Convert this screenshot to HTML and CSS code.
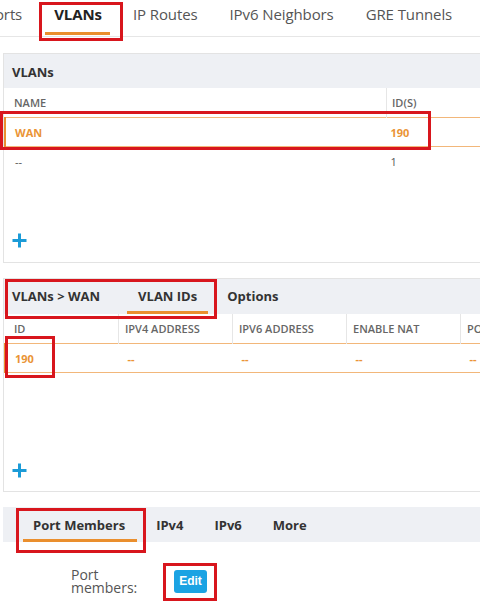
FILE: index.html
```html
<!DOCTYPE html>
<html lang="en">
<head>
    <meta charset="UTF-8">
    <title>VLANs</title>
    <link rel="stylesheet" href="styles.css">
</head>
<body>
<div class="page">
    <div class="topnav">
        <a class="tab">Ports</a>
        <a class="tab active">VLANs</a>
        <a class="tab">IP Routes</a>
        <a class="tab">IPv6 Neighbors</a>
        <a class="tab">GRE Tunnels</a>
    </div>

    <!-- VLAN list -->
    <div class="panel vlans">
        <div class="panel-head">
            <span class="title">VLANs</span>
        </div>
        <table class="grid">
            <tr class="cols">
                <th class="c-name">NAME</th>
                <th>ID(S)</th>
            </tr>
            <tr class="sel">
                <td>WAN</td>
                <td>190</td>
            </tr>
            <tr>
                <td>--</td>
                <td>1</td>
            </tr>
        </table>
        <div class="panel-foot">
            <svg class="plus" width="17" height="17" viewBox="0 0 17 17"><path d="M8.5 1.5v14M1.5 8.5h14" stroke="#1b9bd7" stroke-width="3"/></svg>
        </div>
    </div>

    <!-- VLAN detail -->
    <div class="panel ids">
        <div class="panel-head">
            <span class="title crumb">VLANs &gt; WAN</span>
            <a class="subtab active">VLAN IDs</a>
            <a class="subtab">Options</a>
        </div>
        <table class="grid">
            <tr class="cols">
                <th class="c-id">ID</th>
                <th class="c-addr">IPV4 ADDRESS</th>
                <th class="c-addr">IPV6 ADDRESS</th>
                <th class="c-addr">ENABLE NAT</th>
                <th class="c-addr">PORT MEMBERS</th>
            </tr>
            <tr class="sel">
                <td>190</td>
                <td>--</td>
                <td>--</td>
                <td>--</td>
                <td>--</td>
            </tr>
        </table>
        <div class="panel-foot">
            <svg class="plus" width="17" height="17" viewBox="0 0 17 17"><path d="M8.5 1.5v14M1.5 8.5h14" stroke="#1b9bd7" stroke-width="3"/></svg>
        </div>
    </div>

    <!-- VLAN ID detail -->
    <div class="panel members">
        <div class="panel-head">
            <a class="subtab active">Port Members</a>
            <a class="subtab">IPv4</a>
            <a class="subtab">IPv6</a>
            <a class="subtab">More</a>
        </div>
        <div class="form-row">
            <label class="form-label">Port members:</label>
            <button class="btn-edit">Edit</button>
        </div>
    </div>

    <!-- red callouts -->
    <div class="mark m1"></div>
    <div class="mark m2"></div>
    <div class="mark m3"></div>
    <div class="mark m4"></div>
    <div class="mark m5"></div>
    <div class="mark m6"></div>
</div>
</body>
</html>
```

FILE: styles.css
```css
html, body {
    margin: 0;
    padding: 0;
    background: #fff;
}

body {
    width: 480px;
    height: 601px;
    overflow: hidden;
    font-family: "Open Sans", "Noto Sans", sans-serif;
    color: #555;
}

.page {
    position: relative;
    width: 480px;
    height: 601px;
}

/* top navigation */
.topnav {
    display: flex;
    margin-left: -30px;
    border-bottom: 1px solid #e6e6e6;
    width: 600px;
}

.topnav .tab {
    display: block;
    margin: 0 7px 1px;
    padding: 4px 9px 8px;
    font-size: 15px;
    line-height: 20px;
    letter-spacing: -0.1px;
    color: #555;
    white-space: nowrap;
    border-bottom: 3px solid transparent;
}

.topnav .tab.active {
    color: #222;
    font-weight: bold;
    border-bottom-color: #ea8f2e;
    padding-right: 8px;
}

/* panels */
.panel {
    margin-left: 3px;
    width: 560px;
    border: 1px solid #e3e3e3;
    border-right: none;
}

.vlans {
    margin-top: 16px;
}

.ids {
    margin-top: 15px;
}

.members {
    margin-top: 15px;
    border: none;
}

.panel-head {
    display: flex;
    align-items: flex-start;
    background: #eef0f4;
    height: 34px;
}

.panel-head .title {
    font-size: 13px;
    font-weight: bold;
    color: #333;
    line-height: 20px;
    padding: 8px 0 0 8px;
}

.ids .panel-head {
    height: 35px;
}

.ids .crumb {
    padding: 7px 0 0 8px;
    margin-right: 27px;
}

.subtab {
    display: block;
    padding: 7px 11px 5px;
    line-height: 20px;
    font-size: 13px;
    font-weight: bold;
    color: #333;
    border-bottom: 3px solid transparent;
    margin-right: 8px;
    white-space: nowrap;
}

.subtab.active {
    border-bottom-color: #ea8f2e;
}

.members .panel-head {
    height: 35px;
    padding-left: 20px;
}

.members .subtab {
    padding: 8px 11px 4px;
    margin-right: 9px;
}

.members .subtab.active {
    padding: 8px 12px 4px 10px;
    margin-right: 8px;
}

/* tables */
.grid {
    border-collapse: collapse;
    width: 100%;
    table-layout: fixed;
}

.grid th {
    height: 29px;
    padding: 0 0 0 5px;
    font-size: 11px;
    font-weight: 600;
    color: #666;
    text-align: left;
    border-left: 1px solid #e6e6e6;
    white-space: nowrap;
    overflow: hidden;
}

.grid th:first-child {
    border-left: none;
    padding-left: 9px;
}

.grid td {
    height: 29px;
    padding: 0 0 0 4px;
    font-size: 11px;
    color: #555;
    text-align: left;
}

.ids .grid td {
    padding-left: 9px;
}

.grid td:first-child {
    padding-left: 10px;
}

.grid tr.sel td {
    height: 28px;
    color: #ea9436;
    font-weight: bold;
    border-top: 1px solid #f2b77a;
    border-bottom: 1px solid #f2b77a;
}

.grid tr.sel td:first-child {
    border-left: 2px solid #ea8f2e;
    padding-left: 9px;
}

.vlans .c-name {
    width: 372px;
}

.ids .c-id {
    width: 104px;
}

.ids .c-addr {
    width: 107px;
}

.ids th.c-addr {
    padding-left: 6px;
}

.panel-foot {
    padding: 56px 0 13px 7px;
    line-height: 0;
}

.ids .panel-foot {
    padding: 89px 0 12px 7px;
}

/* form */
.form-row {
    display: flex;
    align-items: center;
    padding: 26px 0 0 68px;
}

.form-label {
    width: 72px;
    margin-right: 31px;
    font-size: 14px;
    line-height: 13px;
    color: #555;
}

.btn-edit {
    font-family: "Liberation Sans", Arial, sans-serif;
    font-size: 12px;
    font-weight: bold;
    color: #fff;
    background: #1ba3e3;
    border: none;
    border-radius: 3px;
    width: 33px;
    height: 23px;
    padding: 0;
}

/* red callout boxes */
.mark {
    position: absolute;
    border: 3px solid #d8161d;
    box-sizing: border-box;
}

.m1 { left: 39px;  top: 2px;   width: 84px;  height: 39px; }
.m2 { left: 0;     top: 111px; width: 431px; height: 39px; }
.m3 { left: 5px;   top: 279px; width: 212px; height: 40px; }
.m4 { left: 5px;   top: 336px; width: 50px;  height: 42px; }
.m5 { left: 16px;  top: 508px; width: 130px; height: 45px; }
.m6 { left: 163px; top: 563px; width: 54px;  height: 38px; }
```
